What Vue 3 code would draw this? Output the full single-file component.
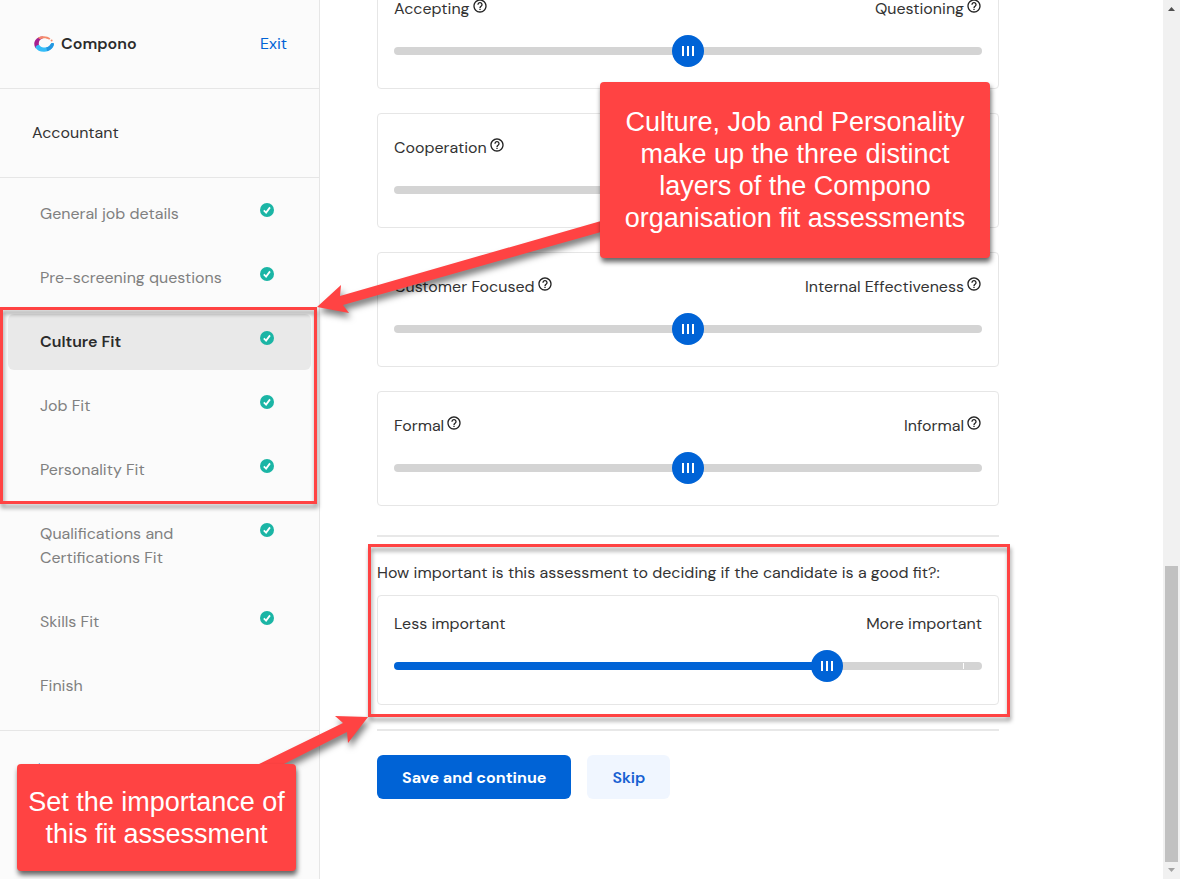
<template>
  <div class="page">
    <aside class="sidebar">
      <header class="brand">
        <svg class="brand-logo" viewBox="0 0 20 16" aria-hidden="true">
          <path d="M1.6 12.2C-1 8 0.2 3.4 4.4 1.4C6 0.6 7.6 0.4 9 0.5L8.6 2.6C6 3.4 4.6 5.4 4.8 8C4.9 9.4 5.4 10.4 6 11.2Z" fill="#a5218f" />
          <path d="M3.8 1.7C8 -0.6 13.4 0 16.4 2.4L15.2 3.7C12.4 1.9 9 1.7 6.2 3.2Z" fill="#f58a6b" />
          <circle cx="17.6" cy="4.4" r="1" fill="#f58a6b" />
          <path d="M1.4 11.6C3 14.6 6.4 16 10.4 15.8C15.6 15.6 19.6 12.4 20 7.6C18.8 6.6 17.2 7 16.6 8.2C15.4 10.6 12.6 11.8 9.6 11.4C7.6 11.2 6.2 10.4 5.4 9.2C3.4 8.6 1.8 9.8 1.4 11.6Z" fill="#35bdf8" />
          <path d="M13 15.3C17 14.2 19.7 11.4 20 7.6C18.8 6.6 17.2 7 16.6 8.2C15.8 9.8 14.2 10.9 12.3 11.3Z" fill="#2496e0" />
        </svg>
        <span class="brand-name">Compono</span>
        <a href="#" class="exit">Exit</a>
      </header>
      <div class="job-title">Accountant</div>
      <nav class="steps">
        <a
          v-for="step in steps"
          :key="step.name"
          href="#"
          class="step"
          :class="{ active: step.active }"
        >
          <span class="step-name">{{ step.name }}</span>
          <svg v-if="step.done" class="step-check" viewBox="0 0 14 14" aria-hidden="true">
            <circle cx="7" cy="7" r="7" fill="#1bb5a5" />
            <path d="M3.8 7.4L6.1 9.6L10 4.4" fill="none" stroke="#fff" stroke-width="1.8" />
          </svg>
        </a>
      </nav>
      <div class="sidebar-footer">
        <a href="#" aria-label="Back">
          <svg viewBox="0 0 16 16" width="16" height="16">
            <path d="M8 2L2 8L8 14M2 8H15" fill="none" stroke="#0063d6" stroke-width="2" />
          </svg>
        </a>
      </div>
    </aside>

    <main class="content">
      <div class="form">
        <section v-for="scale in scales" :key="scale.id" class="card">
          <div class="labels with-help">
            <div class="side">
              <label :for="scale.id">{{ scale.left }}</label>
              <button type="button" class="help" aria-label="Help">
                <svg viewBox="0 0 24 24"><path :d="helpIcon" /></svg>
              </button>
            </div>
            <div v-if="scale.right" class="side">
              <label :for="scale.id">{{ scale.right }}</label>
              <button type="button" class="help" aria-label="Help">
                <svg viewBox="0 0 24 24"><path :d="helpIcon" /></svg>
              </button>
            </div>
          </div>
          <input :id="scale.id" v-model="scale.value" type="range" min="0" max="100" class="slider" />
        </section>

        <hr class="after-scales" />
        <p class="question">How important is this assessment to deciding if the candidate is a good fit?:</p>
        <section class="card importance">
          <div class="labels">
            <label for="importance">Less important</label>
            <label for="importance">More important</label>
          </div>
          <input
            id="importance"
            v-model="importance"
            type="range"
            min="0"
            max="100"
            class="slider filled"
            :style="{ '--fill': importance + '%' }"
          />
        </section>
        <hr />

        <div class="actions">
          <button type="button" class="btn primary">Save and continue</button>
          <button type="button" class="btn">Skip</button>
        </div>
      </div>
    </main>

    <div class="scrollbar">
      <svg viewBox="0 0 17 17"><path d="M5 11L8.5 7L12 11Z" fill="#505050" /></svg>
      <div class="scroll-track"><div class="scroll-thumb"></div></div>
      <svg viewBox="0 0 17 17"><path d="M5 6L8.5 10L12 6Z" fill="#a3a3a3" /></svg>
    </div>

    <!-- annotations on top of the form -->
    <div class="frame frame-steps"></div>
    <div class="frame frame-importance"></div>
    <svg class="arrow arrow-steps" viewBox="0 0 284 94">
      <path d="M0 87L24 65L23 76L284 1V12L26 85L32 93Z" />
    </svg>
    <svg class="arrow arrow-importance" viewBox="0 0 111 50">
      <path d="M111 1L78 0L86 7L0 49H25L90 16L91 27Z" />
    </svg>
    <div class="callout callout-steps">
      Culture, Job and Personality<br />make up the three distinct<br />layers of the Compono<br />organisation fit assessments
    </div>
    <div class="callout callout-importance">Set the importance of<br />this fit assessment</div>
  </div>
</template>

<script setup>
import { ref } from 'vue';

const steps = [
  { name: 'General job details', done: true },
  { name: 'Pre-screening questions', done: true },
  { name: 'Culture Fit', done: true, active: true },
  { name: 'Job Fit', done: true },
  { name: 'Personality Fit', done: true },
  { name: 'Qualifications and Certifications Fit', done: true },
  { name: 'Skills Fit', done: true },
  { name: 'Finish', done: false },
];

const scales = ref([
  { id: 'accepting', left: 'Accepting', right: 'Questioning', value: 50 },
  { id: 'cooperation', left: 'Cooperation', value: 50 },
  { id: 'customer', left: 'Customer Focused', right: 'Internal Effectiveness', value: 50 },
  { id: 'formal', left: 'Formal', right: 'Informal', value: 50 },
]);

const importance = ref(75);

const helpIcon =
  'M11 18h2v-2h-2v2zm1-16C6.48 2 2 6.48 2 12s4.48 10 10 10 10-4.48 10-10S17.52 2 12 2zm0 18c-4.41 0-8-3.59-8-8s3.59-8 8-8 8 3.59 8 8-3.59 8-8 8zm0-14c-2.21 0-4 1.79-4 4h2c0-1.1.9-2 2-2s2 .9 2 2c0 2-3 1.75-3 5h2c0-2.25 3-2.5 3-5 0-2.21-1.79-4-4-4z';
</script>

<style>
body {
  margin: 0;
  background: #fff;
}
</style>

<style scoped>
.page {
  position: relative;
  display: flex;
  height: 100vh;
  overflow: hidden;
  font-family: "DM Sans", Inter, "Open Sans", sans-serif;
  font-size: 16px;
  line-height: 24px;
  color: #333;
}
.page * {
  box-sizing: border-box;
}
a {
  text-decoration: none;
  color: #0063d6;
}

/* sidebar */
.sidebar {
  flex: 0 0 320px;
  background: #fbfbfb;
  border-right: 1px solid #e6e6e6;
}
.brand {
  display: flex;
  align-items: center;
  padding: 32px 32px 32px 34px;
  border-bottom: 1px solid #e6e6e6;
}
.brand-logo {
  width: 20px;
  height: 16px;
  margin-right: 7px;
}
.brand-name {
  color: #2b2b2b;
  font-weight: 600;
}
.exit {
  margin-left: auto;
}
.job-title {
  padding: 32px;
  border-bottom: 1px solid #e6e6e6;
}
.steps {
  display: flex;
  flex-direction: column;
  gap: 8px;
  padding: 8px 8px 16px;
  border-bottom: 1px solid #e6e6e6;
}
.step {
  display: flex;
  justify-content: space-between;
  align-items: flex-start;
  padding: 16px 37px 16px 32px;
  border-radius: 6px;
  color: #808080;
}
.step.active {
  background: #e9e9e9;
  color: #2b2b2b;
  font-weight: 600;
}
.step-name {
  max-width: 190px;
}
.step-check {
  flex: none;
  width: 14px;
  height: 14px;
  margin-top: 1px;
}
.sidebar-footer {
  padding: 30px 32px;
}

/* form */
.content {
  flex: 1;
  padding: 0 57px;
}
.form {
  max-width: 622px;
  margin-top: -26px;
}
.card {
  padding: 16px 16px 21px;
  border: 1px solid #e6e6e6;
  border-radius: 4px;
}
.card.importance {
  padding-bottom: 22px;
}
.card + .card {
  margin-top: 24px;
}
.labels {
  display: flex;
  justify-content: space-between;
  margin-bottom: 14px;
}
.with-help {
  height: 30px;
}
.side {
  display: flex;
  align-items: center;
  gap: 2px;
}
.side label {
  padding-top: 6px;
}
.help {
  width: 16px;
  height: 16px;
  padding: 0;
  border: 0;
  background: none;
  cursor: pointer;
}
.help svg {
  display: block;
  fill: #222;
}
.slider {
  display: block;
  width: 100%;
  height: 32px;
  margin: 0;
  appearance: none;
  background: none;
}
.slider::-webkit-slider-runnable-track {
  height: 8px;
  border-radius: 4px;
  background: #d4d4d4;
}
.slider.filled::-webkit-slider-runnable-track {
  background:
    linear-gradient(#0063d6, #0063d6) left / var(--fill) 100% no-repeat,
    linear-gradient(#fff, #fff) right 18px center / 1px 6px no-repeat,
    #d4d4d4;
}
.slider::-webkit-slider-thumb {
  appearance: none;
  width: 32px;
  height: 32px;
  margin-top: -12px;
  border-radius: 50%;
  background:
    linear-gradient(#fff, #fff) 10px 11px / 2px 10px no-repeat,
    linear-gradient(#fff, #fff) 15px 11px / 2px 10px no-repeat,
    linear-gradient(#fff, #fff) 20px 11px / 2px 10px no-repeat,
    #0063d6;
}
hr {
  height: 2px;
  margin: 24px 0;
  border: 0;
  background: #e8e8e8;
}
hr.after-scales {
  margin-top: 29px;
}
.question {
  margin: 0 0 10px;
}
.actions {
  display: flex;
  gap: 16px;
}
.btn {
  height: 44px;
  padding: 0 25px;
  border: 0;
  border-radius: 6px;
  background: #f0f6ff;
  color: #1660d2;
  font-family: inherit;
  font-size: 16px;
  font-weight: 600;
  cursor: pointer;
}
.btn.primary {
  background: #0063d6;
  color: #fff;
  font-weight: 700;
}

/* scrollbar */
.scrollbar {
  display: flex;
  flex-direction: column;
  flex: 0 0 17px;
  background: #f1f1f1;
}
.scrollbar svg {
  display: block;
  width: 17px;
  height: 17px;
}
.scroll-track {
  display: flex;
  flex: 1;
  align-items: flex-end;
  padding: 0 2px;
}
.scroll-thumb {
  width: 100%;
  height: 35%;
  background: #c1c1c1;
}

/* annotations */
.frame,
.arrow,
.callout {
  position: absolute;
  pointer-events: none;
}
.frame {
  border: 3px solid #ff4343;
  filter: drop-shadow(1px 4px 2px rgba(0, 0, 0, 0.4));
}
.frame-steps {
  left: 0;
  top: 307px;
  width: 317px;
  height: 197px;
}
.frame-importance {
  left: 368px;
  top: 544px;
  width: 642px;
  height: 173px;
}
.arrow {
  overflow: visible;
  fill: #ff4343;
  filter: drop-shadow(2px 5px 3px rgba(0, 0, 0, 0.5));
}
.arrow-steps {
  left: 317px;
  top: 220px;
  width: 284px;
  height: 94px;
}
.arrow-importance {
  left: 257px;
  top: 716px;
  width: 111px;
  height: 50px;
}
.callout {
  display: grid;
  align-content: center;
  border-radius: 4px;
  background: #ff4343;
  box-shadow: 1px 4px 5px rgba(0, 0, 0, 0.6);
  color: #fff;
  font-family: "Liberation Sans", Arial, sans-serif;
  font-size: 27px;
  line-height: 32px;
  text-align: center;
}
.callout-steps {
  left: 600px;
  top: 82px;
  width: 390px;
  height: 176px;
}
.callout-importance {
  left: 17px;
  top: 764px;
  width: 279px;
  height: 107px;
}
</style>
